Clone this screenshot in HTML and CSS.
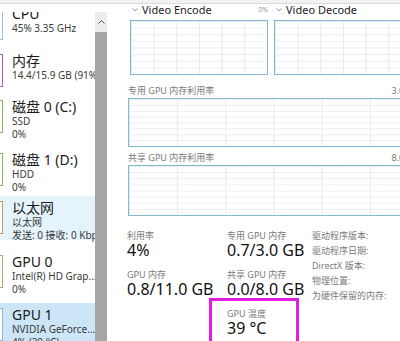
FILE: index.html
```html
<!DOCTYPE html>
<html lang="zh-CN">
<head>
    <meta charset="UTF-8">
    <meta name="viewport" content="width=device-width, initial-scale=1.0">
    <title>任务管理器 - GPU 1</title>
    <link rel="stylesheet" href="styles.css">
</head>
<body>

<div class="tabs"></div>

<div class="main">
    <!-- 左侧设备列表 -->
    <div class="side">
        <div class="list">
            <div class="item short cpu-item">
                <div class="thumb cpu"></div>
                <div class="info">
                    <div class="name">CPU</div>
                    <div class="sub">45% 3.35 GHz</div>
                </div>
            </div>
            <div class="item short mem-item">
                <div class="thumb mem"></div>
                <div class="info">
                    <div class="name">内存</div>
                    <div class="sub">14.4/15.9 GB (91%)</div>
                </div>
            </div>
            <div class="item">
                <div class="thumb disk"></div>
                <div class="info">
                    <div class="name">磁盘 0 (C:)</div>
                    <div class="sub">SSD</div>
                    <div class="sub">0%</div>
                </div>
            </div>
            <div class="item disk1-item">
                <div class="thumb disk"></div>
                <div class="info">
                    <div class="name">磁盘 1 (D:)</div>
                    <div class="sub">HDD</div>
                    <div class="sub">0%</div>
                </div>
            </div>
            <div class="item hover">
                <div class="thumb net"></div>
                <div class="info">
                    <div class="name">以太网</div>
                    <div class="sub">以太网</div>
                    <div class="sub">发送: 0 接收: 0 Kbps</div>
                </div>
            </div>
            <div class="item">
                <div class="thumb gpu"></div>
                <div class="info">
                    <div class="name">GPU 0</div>
                    <div class="sub">Intel(R) HD Grap...</div>
                    <div class="sub">0%</div>
                </div>
            </div>
            <div class="item active">
                <div class="thumb gpu1"></div>
                <div class="info">
                    <div class="name">GPU 1</div>
                    <div class="sub">NVIDIA GeForce...</div>
                    <div class="sub">4% (39 °C)</div>
                </div>
            </div>
        </div>
    </div>

    <div class="scrollbar">
        <div class="arrow">
            <svg width="7" height="4" viewBox="0 0 7 4"><polyline points="0.5,3.5 3.5,0.5 6.5,3.5" fill="none" stroke="#555" stroke-width="1"/></svg>
        </div>
        <div class="bar"></div>
    </div>

    <!-- GPU 详细信息 -->
    <div class="content">
        <div class="pair heads">
            <div class="ghead">
                <svg class="chev" width="6" height="4" viewBox="0 0 6 4"><polyline points="0.5,0.5 3,3 5.5,0.5" fill="none" stroke="#999" stroke-width="1"/></svg>
                <span>Video Encode</span>
                <span class="pct">0%</span>
            </div>
            <div class="ghead">
                <svg class="chev" width="6" height="4" viewBox="0 0 6 4"><polyline points="0.5,0.5 3,3 5.5,0.5" fill="none" stroke="#999" stroke-width="1"/></svg>
                <span>Video Decode</span>
            </div>
        </div>
        <div class="pair">
            <div class="graph small"></div>
            <div class="graph small"></div>
        </div>

        <div class="label-row first">
            <span>专用 GPU 内存利用率</span>
            <span>3.0 GB</span>
        </div>
        <div class="graph wide"></div>

        <div class="label-row">
            <span>共享 GPU 内存利用率</span>
            <span>8.0 GB</span>
        </div>
        <div class="graph wide tall"></div>

        <div class="stats">
            <div class="stat-grid">
                <div class="stat">
                    <div class="lbl">利用率</div>
                    <div class="val">4%</div>
                </div>
                <div class="stat">
                    <div class="lbl">专用 GPU 内存</div>
                    <div class="val">0.7/3.0 GB</div>
                </div>
                <div class="stat">
                    <div class="lbl">GPU 内存</div>
                    <div class="val">0.8/11.0 GB</div>
                </div>
                <div class="stat">
                    <div class="lbl">共享 GPU 内存</div>
                    <div class="val">0.0/8.0 GB</div>
                </div>
                <div class="stat"></div>
                <div class="stat temp">
                    <div class="lbl">GPU 温度</div>
                    <div class="val">39 °C</div>
                    <div class="mark"></div>
                </div>
            </div>
            <div class="props">
                <div>驱动程序版本:</div>
                <div>驱动程序日期:</div>
                <div>DirectX 版本:</div>
                <div>物理位置:</div>
                <div>为硬件保留的内存:</div>
            </div>
        </div>
    </div>
</div>

</body>
</html>
```

FILE: styles.css
```css
html, body {
    margin: 0;
    padding: 0;
    overflow: hidden;
}
body {
    font-family: "Noto Sans", "Noto Sans CJK SC", sans-serif;
    background-color: #ffffff;
    color: #1a1a1a;
    width: 400px;
    height: 341px;
}
.tabs {
    height: 3px;
    background-color: #f2f2f2;
    border-bottom: 1px solid #d9d9d9;
}
.main {
    display: flex;
    height: 337px;
}
/* Lista lateral */
.side {
    width: 95px;
    flex-shrink: 0;
    padding-top: 8px;
    box-sizing: border-box;
    overflow: hidden;
}
.list {
    height: 100%;
    overflow: hidden;
}
.item {
    display: flex;
    height: 44px;
    margin-bottom: 9px;
    white-space: nowrap;
}
.item.short {
    height: 36px;
}
.item.cpu-item {
    margin-top: -10px;
    margin-bottom: 11px;
}
.item.mem-item {
    margin-bottom: 10px;
}
.item.disk1-item {
    margin-bottom: 4px;
}
.item.hover {
    background-color: #e5f3fb;
    margin-bottom: 10px;
}
.item.active {
    background-color: #cce6f8;
    height: 60px;
}
.thumb {
    width: 40px;
    height: 33px;
    margin: 5px 0 0 -37px;
    flex-shrink: 0;
    border: 1px solid #8fc2e2;
    box-sizing: border-box;
    background-color: #ffffff;
}
.thumb.mem { border-color: #a55fc2; }
.thumb.disk { border-color: #8cb45a; }
.thumb.net { border-color: #c39a63; }
.thumb.gpu { border-color: #c0a071; }
.thumb.gpu1 { border-color: #8fb6d8; }
.info {
    padding: 3px 0 0 9px;
}
.name {
    font-size: 14px;
    line-height: 17px;
    color: #1a1a1a;
}
.sub {
    font-size: 10px;
    line-height: 13px;
    color: #3a3a3a;
}
/* Barra de rolagem */
.scrollbar {
    width: 12px;
    flex-shrink: 0;
    margin-top: 8px;
    display: flex;
    flex-direction: column;
    background-color: #ececec;
}
.arrow {
    height: 20px;
    display: flex;
    justify-content: center;
    align-items: center;
}
.bar {
    flex: 1;
    background-color: #a6a6a6;
}
/* Conteúdo */
.content {
    width: 292px;
    flex-shrink: 0;
    margin-left: 20px;
}
.pair {
    display: flex;
    gap: 6px;
    margin-left: 3px;
}
.ghead {
    width: 138px;
    height: 12px;
    display: flex;
    align-items: center;
    font-size: 11px;
    line-height: 12px;
    color: #222;
}
.chev {
    margin: 0 4px 0 2px;
}
.pct {
    margin-left: auto;
    font-size: 7px;
    color: #999;
}
.graph {
    border: 1px solid #86b7cb;
    box-sizing: border-box;
    background-color: #ffffff;
    background-image:
        linear-gradient(to right, #e3ecf1 1px, transparent 1px),
        linear-gradient(to bottom, #e8eff3 1px, transparent 1px);
    background-size: calc(100% / 6) calc(100% / 8);
}
.graph.small {
    width: 138px;
    height: 55px;
    margin-top: 4px;
}
.graph.wide {
    width: 291px;
    height: 49px;
    margin-left: 1px;
}
.graph.tall {
    height: 51px;
}
.label-row {
    display: flex;
    justify-content: space-between;
    width: 291px;
    margin: 5px 0 1px 1px;
    font-size: 9px;
    line-height: 12px;
    color: #7a7a7a;
}
.label-row.first {
    margin-top: 10px;
}
/* Estatísticas */
.stats {
    display: flex;
    margin-top: 15px;
}
.stat-grid {
    display: grid;
    grid-template-columns: 100px 85px;
    row-gap: 11px;
}
.stat {
    position: relative;
}
.lbl {
    font-size: 9px;
    line-height: 10px;
    color: #7a7a7a;
}
.val {
    font-size: 16px;
    line-height: 18px;
    color: #111;
}
.mark {
    position: absolute;
    left: -18px;
    top: -11px;
    width: 90px;
    height: 60px;
    border: 3px solid #e01de0;
    box-sizing: border-box;
}
.props {
    margin-top: -3px;
    font-size: 9px;
    line-height: 15px;
    color: #7a7a7a;
}
```
